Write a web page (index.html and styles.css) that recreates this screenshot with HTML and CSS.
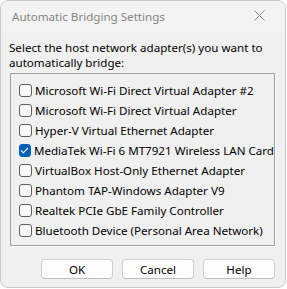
FILE: index.html
```html
<!DOCTYPE html>
<html lang="en">
<head>
  <meta charset="UTF-8" />
  <title>Automatic Bridging Settings</title>
  <link rel="stylesheet" href="styles.css">
</head>
<body>
  <div class="dialog">
    <!-- Title bar -->
    <div class="titlebar">
      <span class="title">Automatic Bridging Settings</span>
      <svg class="close" width="11" height="11" viewBox="0 0 11 11">
        <path d="M0.5 0.5 L10.5 10.5 M10.5 0.5 L0.5 10.5" stroke="#8a8a8a" stroke-width="1" fill="none"/>
      </svg>
    </div>

    <div class="content">
      <p class="prompt">Select the host network adapter(s) you want to automatically bridge:</p>

      <!-- Adapter list -->
      <div class="list">
        <label class="item"><span class="box"></span>Microsoft Wi-Fi Direct Virtual Adapter #2</label>
        <label class="item"><span class="box"></span>Microsoft Wi-Fi Direct Virtual Adapter</label>
        <label class="item"><span class="box"></span>Hyper-V Virtual Ethernet Adapter</label>
        <label class="item"><span class="box checked">
          <svg width="9" height="7" viewBox="0 0 9 7"><path d="M1 3.5 L3.3 5.8 L8 1" stroke="#fff" stroke-width="1.1" fill="none"/></svg>
        </span>MediaTek Wi-Fi 6 MT7921 Wireless LAN Card</label>
        <label class="item"><span class="box"></span>VirtualBox Host-Only Ethernet Adapter</label>
        <label class="item"><span class="box"></span>Phantom TAP-Windows Adapter V9</label>
        <label class="item"><span class="box"></span>Realtek PCIe GbE Family Controller</label>
        <label class="item"><span class="box"></span>Bluetooth Device (Personal Area Network)</label>
      </div>

      <!-- Buttons -->
      <div class="buttons">
        <button class="btn">OK</button>
        <button class="btn">Cancel</button>
        <button class="btn">Help</button>
      </div>
    </div>
  </div>
</body>
</html>
```

FILE: styles.css
```css
* {
  margin: 0;
  padding: 0;
  box-sizing: border-box;
}

body {
  background: #ffffff;
  font-family: "Noto Sans", sans-serif;
  font-size: 11.6px;
  color: #000;
}

/* Window frame */
.dialog {
  width: 286px;
  height: 288px;
  background: #f0f0f0;
  border: 1px solid #c9c9c9;
  border-radius: 8px;
  overflow: hidden;
}

.titlebar {
  height: 31px;
  background: #f3f3f3;
  display: flex;
  align-items: center;
  justify-content: space-between;
  padding: 0 20px 0 11px;
}

.title {
  color: #858585;
  margin-top: -1px;
}

.close {
  margin-top: -2px;
}

.content {
  padding: 8px 10px 0 8px;
}

.prompt {
  line-height: 15px;
  width: 268px;
}

/* Sunken list box */
.list {
  margin: 3px 0 0 1px;
  height: 173px;
  border: 1px solid #a0a0a0;
  box-shadow: 1px 1px 0 #ffffff;
  padding: 6px 0 0 8px;
}

.item {
  display: flex;
  align-items: center;
  height: 20px;
  white-space: nowrap;
}

.box {
  width: 13px;
  height: 13px;
  border: 1px solid #5f5f5f;
  border-radius: 3px;
  background: #f7f7f7;
  margin-right: 3px;
  display: flex;
  align-items: center;
  justify-content: center;
}

.box.checked {
  background: #005fb8;
  border-color: #005fb8;
}

.buttons {
  display: flex;
  justify-content: flex-end;
  gap: 9px;
  margin-top: 13px;
}

.btn {
  width: 72px;
  height: 20px;
  font-family: "Noto Sans", sans-serif;
  font-size: 11.6px;
  color: #000;
  background: #fdfdfd;
  border: 1px solid #d0d0d0;
  border-bottom-color: #bdbdbd;
  border-radius: 4px;
}
```
